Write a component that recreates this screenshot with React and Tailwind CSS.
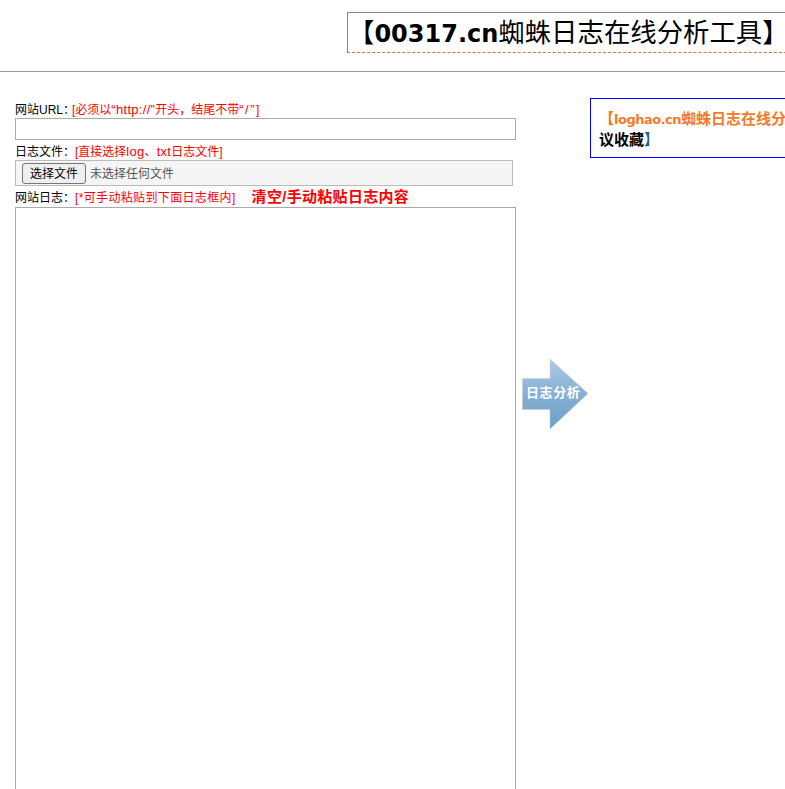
import React from 'react';

const bodyFont = '"Liberation Sans", "Noto Sans CJK SC", sans-serif';

function Arrow() {
  return (
    <div className="relative mt-[286px] ml-[6px] w-[68px] h-[72px] shrink-0">
      <svg width="68" height="72" viewBox="0 0 68 72" className="block">
        <defs>
          <linearGradient id="arrowFill" x1="0" y1="0" x2="0" y2="1">
            <stop offset="0" stopColor="#aecbe3" />
            <stop offset="0.5" stopColor="#86b0d3" />
            <stop offset="1" stopColor="#6a9fc9" />
          </linearGradient>
        </defs>
        <path d="M0.5 20.5H28V1L66 35.5L28 71V51.5H0.5Z" fill="url(#arrowFill)" stroke="#c8c8c8" strokeWidth="0.5" />
      </svg>
      <span className="absolute left-[4px] top-[26px] text-[13px] leading-[17px] font-bold text-white tracking-[0.6px] whitespace-nowrap">
        日志分析
      </span>
    </div>
  );
}

export default function App() {
  return (
    <div className="w-[785px] h-[789px] overflow-hidden bg-white text-black" style={{ fontFamily: bodyFont }}>
      {/* header */}
      <div className="h-[72px] border-b border-[#999] pt-[12px] pl-[347px]">
        <h1 className="w-[460px] h-[41px] border-t border-l border-[#888] border-b border-b-[#e0703a] [border-bottom-style:dashed] text-[26.4px] leading-[41px] font-normal whitespace-nowrap">
          【<span className="font-bold text-[24px] leading-none font-['DejaVu_Sans']">00317.cn</span>蜘蛛日志在线分析工具】
        </h1>
      </div>

      <div className="flex items-start">
        {/* form column */}
        <div className="ml-[15px] w-[501px] shrink-0 pt-[30px] text-[12px] leading-[16px]">
          <div className="whitespace-nowrap">
            网站URL：
            <span className="ml-[-3px] text-[#f00]">
              [必须以<span className="text-[13px] leading-none tracking-[0.3px]">“http://”</span>开头，结尾不带<span className="text-[13px] leading-none tracking-[1.5px]">“/”</span>]
            </span>
          </div>
          <input type="text" className="block w-[501px] h-[22px] border border-[#aaa] bg-white outline-none" />

          <div className="mt-[4px] whitespace-nowrap">
            日志文件：
            <span className="text-[#f00]">
              [直接选择<span className="text-[13px] leading-none tracking-[0.3px]">log</span>、<span className="text-[13px] leading-none tracking-[0.3px]">txt</span>日志文件]
            </span>
          </div>
          <div className="w-[498px] h-[26px] border border-[#bbb] bg-[#f5f5f5] flex items-center pl-[6px]">
            <button className="w-[64px] h-[21px] pt-[1px] border border-[#767676] rounded-[3px] bg-[#efefef] text-[12px] leading-[18px] text-black">
              选择文件
            </button>
            <span className="ml-[4px] mt-[2px] text-[12px] text-[#555]">未选择任何文件</span>
          </div>

          <div className="mt-[3px] flex items-center whitespace-nowrap h-[18px]">
            网站日志：<span className="text-[#f00] tracking-[0.35px]">[*可手动粘贴到下面日志框内]</span>
            <span className="ml-[16px] mb-[2px] text-[#f00] text-[15px] font-bold tracking-[0.3px]">清空/手动粘贴日志内容</span>
          </div>
          <textarea className="block w-[501px] h-[640px] border border-[#aaa] bg-white outline-none resize-none" />
        </div>

        <Arrow />

        {/* notice box */}
        <div className="mt-[26px] w-[310px] h-[60px] shrink-0 border border-[#00f] px-[8px] pt-[9px] text-[15px] leading-[21px] font-bold whitespace-nowrap">
          <span className="text-[#f37b2b]">
            【<span className="text-[13px] leading-none tracking-[-0.5px] font-['DejaVu_Sans']">loghao.cn</span>蜘蛛日志在线分析工具，建
          </span>
          <br />
          议收藏<span className="text-[#1d5f9c]">】</span>
        </div>
      </div>
    </div>
  );
}
